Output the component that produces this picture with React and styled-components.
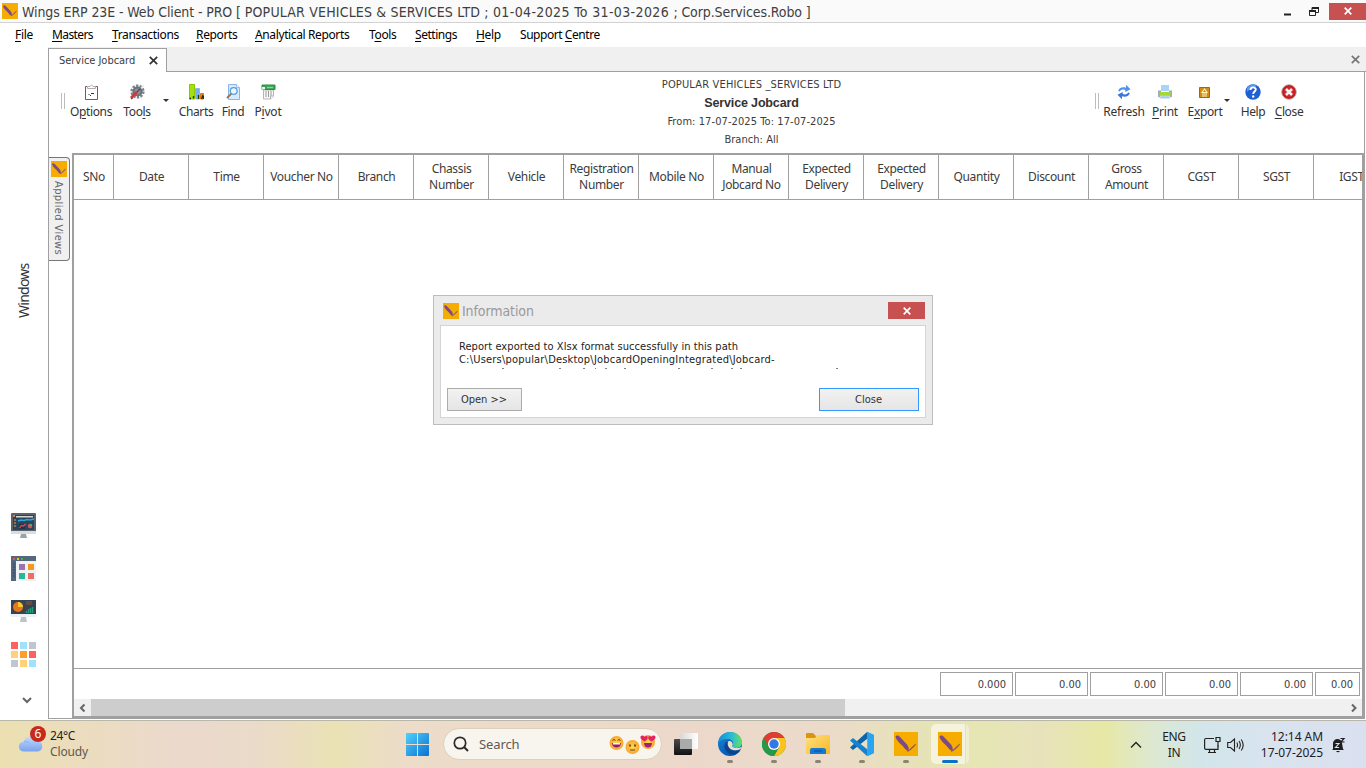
import React from "react";
import styled, { createGlobalStyle } from "styled-components";

const UI = `"Noto Sans", "Open Sans", sans-serif`;
const TAHOMA = `"DejaVu Sans Condensed", "DejaVu Sans", "Noto Sans", sans-serif`;
const LINE = "#a0a0a0";

const Global = createGlobalStyle`
  * { box-sizing: border-box; }
  body { margin: 0; background: #fff; overflow: hidden; font-family: ${UI}; }
  u { text-underline-offset: 2px; text-decoration-thickness: 1px; }
`;

const Screen = styled.div`
  width: 1366px; height: 768px; display: flex; flex-direction: column;
  position: relative; overflow: hidden; color: #3c3c3c; white-space: nowrap;
`;

/* Window chrome */
const TitleBar = styled.header`
  height: 23px; flex: none; display: flex; align-items: center; background: #fafafa;
  border-bottom: 1px solid #d2d2d2; padding-left: 2px;
`;
const TitleText = styled.div`
  font: 14px/22px ${TAHOMA}; letter-spacing: -0.1px; margin-left: 4px; flex: 1; color: #3f3f3f; padding-top: 1px;
  white-space: pre;
`;
const TitlePart = styled.span`letter-spacing: ${(p) => p.$ls}px;`;
const CaptionButtons = styled.div`display: flex; align-items: center; height: 22px;`;
const RedClose = styled.div`
  width: 37px; height: 17px; flex: none; background: #c75050; display: flex; align-items: center;
  justify-content: center;
`;
const MenuBar = styled.nav`
  height: 24px; flex: none; display: flex; padding-left: 15px; background: #fff;
`;
const MenuItem = styled.span`
  width: ${(p) => p.$w}px; font: 12px/24px ${UI}; letter-spacing: ${(p) => p.$ls || -0.35}px; color: #000;
`;

const Body = styled.div`flex: none; height: 673px; display: flex;`;

/* Left rail */
const Rail = styled.aside`
  width: 48px; display: flex; flex-direction: column; align-items: center; padding-right: 1px;
`;
const RailLabel = styled.span`
  writing-mode: vertical-rl; transform: rotate(180deg); font: 14px/18px ${UI}; letter-spacing: -0.75px;
  color: #333; margin-top: 215px; height: 57px; text-align: center;
`;
const RailIcons = styled.div`
  margin-top: 194px; display: flex; flex-direction: column; gap: 18px;
  svg { display: block; }
`;
const RailMore = styled.div`margin: 28px 0 0 7px; line-height: 0;`;

/* Workspace */
const Workspace = styled.main`flex: 1; display: flex; flex-direction: column;`;
const TabStrip = styled.div`
  height: 25px; flex: none; display: flex; justify-content: space-between; background: #f0f0f0;
  padding-top: 1px; box-shadow: inset 0 -1px 0 ${LINE};
`;
const Tab = styled.div`
  width: 119px; height: 24px; background: #fff; border: 1px solid ${LINE}; border-bottom: 0;
  display: flex; align-items: center; padding-left: 10px; position: relative;
`;
const TabLabel = styled.span`font: 11px/22px ${TAHOMA}; letter-spacing: -0.03px; width: 90px;`;
const StripClose = styled.div`padding: 7px 6px 0 0; line-height: 0;`;

const Page = styled.section`
  flex: none; height: 647px; width: 1317px; border-left: 1px solid ${LINE}; border-right: 1px solid ${LINE};
  border-bottom: 1px solid ${LINE};
  background: #fff;
`;
const Toolbar = styled.div`height: 81px; display: flex;`;
const ToolGroup = styled.div`
  display: flex; padding: 12px 0 0 ${(p) => p.$pad}px; width: ${(p) => p.$w}px; flex: none;
`;
const Grip = styled.i`
  width: 4px; height: 16px; margin-top: 9px; border: solid #bdbdbd; border-width: 0 1px;
`;
const ToolButton = styled.div`
  width: ${(p) => p.$w}px; margin-left: ${(p) => p.$ml}px; display: flex; flex-direction: column;
  align-items: center; svg { display: block; }
`;
const ToolLabel = styled.span`
  font: 12px/16px ${UI}; letter-spacing: ${(p) => p.$ls || -0.35}px; margin-top: 4px; color: #333;
`;
const Caret = styled.i`
  width: 0; height: 0; margin: 15px 0 0 ${(p) => p.$ml}px; border: solid transparent; border-width: 3px 3px 0;
  border-top-color: #333;
`;
const Heading = styled.div`
  width: 505px; flex: none; display: flex; flex-direction: column; align-items: center; padding-top: 4px;
`;
const HeadLine = styled.span`
  font: 11px/${(p) => p.$h || 18}px ${TAHOMA}; letter-spacing: ${(p) => p.$ls}px;
`;
const HeadTitle = styled.span`
  font: bold 12.5px/21px "Liberation Sans", Arial, sans-serif; letter-spacing: -0.15px; color: #333;
`;

const Content = styled.div`display: flex; height: 565px;`;
const SideTabs = styled.div`width: 23px; padding-top: 4px; flex: none;`;
const SideTab = styled.div`
  width: 21px; height: 104px; background: #f0f0f0; border: 1px solid #777; border-left: 0; border-radius: 0 4px 4px 0;
  padding: 3px 0 0 2px; display: flex; flex-direction: column; align-items: flex-start; svg { display: block; }
`;
const SideTabText = styled.span`
  writing-mode: vertical-rl; font: 11px/15px ${TAHOMA}; letter-spacing: 0.4px; color: #666; margin: 4px 0 0 0;
`;

/* Report grid */
const GridPanel = styled.div`
  width: 1292px; height: 565px; border: 2px solid ${LINE}; display: flex; flex-direction: column; flex: none;
  overflow: hidden;
`;
const HeadRow = styled.div`
  display: grid; grid-template-columns: 40px repeat(17, 75px); height: 45px; flex: none;
  border-bottom: 1px solid ${LINE};
`;
const HeadCell = styled.div`
  border-right: 1px solid ${LINE}; display: flex; align-items: center; justify-content: center; text-align: center;
  font: 12px/16px ${UI}; letter-spacing: -0.35px; white-space: pre-line; padding-left: 1px;
`;
const Rows = styled.div`flex: 1;`;
const Totals = styled.div`
  height: 31px; border-top: 1px solid ${LINE}; flex: none; display: flex; gap: 2px; padding: 3px 0 0 866px;
`;
const Total = styled.div`
  width: ${(p) => p.$w || 73}px; height: 24px; border: 1px solid ${LINE}; text-align: right; padding-right: 6px;
  font: 11px/23px ${TAHOMA}; letter-spacing: 0;
`;
const ScrollBar = styled.div`height: 17px; flex: none; background: #f0f0f0; display: flex; align-items: center;`;
const ScrollArrow = styled.div`
  width: 17px; height: 17px; display: flex; align-items: center; justify-content: center;
`;
const Thumb = styled.div`width: 754px; height: 17px; background: #cdcdcd; margin-right: 500px;`;

/* Message box */
const Dialog = styled.div`
  position: absolute; left: 433px; top: 295px; width: 500px; height: 130px; background: #ebebeb;
  border: 1px solid #bdbdbd; padding: 0 6px 6px; display: flex; flex-direction: column;
`;
const DialogTitle = styled.div`
  height: 29px; display: flex; align-items: center; padding: 0 1px 0 3px; color: #999;
  font: 14px/29px ${TAHOMA}; letter-spacing: -0.1px;
  span { flex: 1; margin-left: 3px; padding-top: 1px; }
`;
const DialogBody = styled.div`
  flex: 1; background: #fff; border: 1px solid #d4d4d4; display: flex; flex-direction: column;
`;
const Message = styled.div`
  height: 45px; padding: 14px 0 0 18px; font: 11px/13px ${TAHOMA}; color: #222; overflow: hidden;
  svg { display: block; margin-top: 1px; }
`;
const MessageLine = styled.div`letter-spacing: ${(p) => p.$ls}px;`;
const Buttons = styled.div`
  display: flex; justify-content: space-between; padding: 17px 6px 0;
`;
const Button = styled.button`
  width: ${(p) => p.$w}px; height: 23px; padding: 1px 1px 0 0; font: 11px/20px ${TAHOMA}; color: #333;
  border: 1px solid ${(p) => (p.$focus ? "#3399ff" : "#acacac")};
  background: linear-gradient(#f2f2f2, #e5e5e5);
`;

/* Taskbar */
const Taskbar = styled.footer`
  height: 48px; flex: none; display: flex; align-items: flex-start; border-top: 1px solid #b9b6aa; color: #222;
  background: linear-gradient(90deg, #ebe0b2 0, #ebd9cd 180px, #eadbc9 260px, #eae2b4 338px, #ecdcc8 400px,
    #eddbc9 500px, #ecd8ca 700px, #ebdbc9 830px, #e6e3b6 930px, #e6e6b4 985px, #e8e2bc 1040px, #e7e8a6 1105px,
    #dde8cf 1150px, #d2e6ea 1200px, #d9e3ef 1275px, #dae0ef 1366px);
`;
const Weather = styled.div`
  width: 386px; display: flex; padding: 5px 0 0 18px; svg { display: block; }
`;
const WeatherText = styled.div`
  font: 12px/16px ${UI}; letter-spacing: -0.35px; margin: 2px 0 0 3px; color: #222;
  div + div { color: #5d594e; letter-spacing: -0.15px; }
`;
const StartButton = styled.div`width: 57px; padding: 12px 0 0 20px; svg { display: block; }`;
const SearchBox = styled.div`
  width: 219px; height: 32px; margin-top: 7px; border-radius: 16px; background: #f8f4ee; border: 1px solid #dccfbe;
  display: flex; align-items: center; padding-left: 9px;
  span { font: 13px/18px ${UI}; letter-spacing: -0.1px; color: #5d5a57; margin-left: 10px; width: 130px; }
`;
const Apps = styled.div`display: flex; gap: 6px; margin: 3px 0 0 5px;`;
const AppSlot = styled.div`
  width: 38px; height: 40px; padding-top: 8px; border-radius: 5px; display: flex; flex-direction: column;
  align-items: center;
  background: ${(p) => (p.$active ? "linear-gradient(90deg, #f5f3dc 34px, #e3e2b9 34px 35px, #efeecf 35px)" : "none")};
  svg { display: block; }
`;
const Running = styled.i`
  width: ${(p) => (p.$active ? 16 : 6)}px; height: 3px; border-radius: 2px; margin-top: 4px;
  background: ${(p) => (p.$active ? "#0a73c9" : "#8b8474")};
`;
const Tray = styled.div`
  margin-left: auto; display: flex; height: 47px; align-items: center; width: 236px; svg { display: block; }
`;
const TrayText = styled.div`
  font: 12px/16px ${UI}; letter-spacing: ${(p) => p.$ls}px; text-align: ${(p) => p.$align};
  width: ${(p) => p.$w}px; margin-left: ${(p) => p.$ml}px; color: #1c1c1c;
`;
const TrayIcon = styled.div`margin-left: ${(p) => p.$ml}px;`;

const Wings = ({ s = 16 }) => (
  <svg width={s} height={s} viewBox="0 0 24 24">
    <rect width="24" height="24" fill="#f7ad00" />
    <path d="M1.500 4.500c1-1.600 3-1 4.500.4l7 7.600c1.600 1.900 2.100 4 1.500 6.500-3-.5-4-3-6-5.200C6.500 11.500 2 8.500 1.500 4.500Z" fill="#7d4a86" />
    <path d="M13.500 18.800c2.300-.5 4.200-3.800 8.300-6.800-2.300 3.600-5.200 6-8.300 7.400Z" fill="#7d4a86" stroke="#8a5575" strokeWidth=".7" />
  </svg>
);
const Cross = ({ s = 8, c = "#333", w = 1.8 }) => (
  <svg width={s} height={s} viewBox="0 0 8 8">
    <path d="M.7.7l6.600 6.600M7.300.7.700 7.300" stroke={c} strokeWidth={w} />
  </svg>
);
const Chevron = ({ d, c = "#666", w = 2 }) => (
  <svg width="10" height="10" viewBox="0 0 10 10">
    <path d={d} fill="none" stroke={c} strokeWidth={w} />
  </svg>
);

const icon16 = { width: 16, height: 16, viewBox: "0 0 16 16" };
const icons = {
  options: (
    <svg {...icon16}>
      <path d="M4 2.500H2.500v13h12v-13H12" fill="#fff" stroke="#80545a" />
      <path d="M4.500 4.500v-2H7L8.500.8 10 2.500h2.500v2Z" fill="#fff" stroke="#b5aaab" />
      <path d="M5.500 10.500h1M8 9.500h3M7 11.500h1" stroke="#333" />
    </svg>
  ),
  tools: (
    <svg {...icon16}>
      <circle cx="8.500" cy="7.500" r="5.800" fill="none" stroke="#7c848c" strokeWidth="2.600" strokeDasharray="2.300 1.300" />
      <circle cx="8.500" cy="7.500" r="4" fill="#8b939b" stroke="#69717a" strokeWidth="2" />
      <path d="M2 14l6-6" stroke="#d9343c" strokeWidth="2.800" />
      <path d="M8 8l3-3M2 15l1.500-1" stroke="#59484c" strokeWidth="1.400" />
      <path d="M12 4l2.500-2.500" stroke="#dfe5ea" strokeWidth="1.500" />
    </svg>
  ),
  charts: (
    <svg {...icon16}>
      <path d="M1.500.5h5V15h-5Z" fill="#a4e010" stroke="#8cc800" />
      <path d="M7.500 4.500h4V15h-4Z" fill="#78aef0" stroke="#90b7ea" />
      <path d="M12.500 9.500h3V15h-3Z" fill="#f58a13" stroke="#dc7a12" />
      <path d="M1.500 14.500h1.500M5.500 12v2.500M10.500 11v4M13.500 15l1.500-4M15.500 12v3" fill="none" stroke="#26320e" strokeWidth="1.300" />
    </svg>
  ),
  find: (
    <svg {...icon16}>
      <path d="M3.500.5h8L14.500 3.500v12h-11Z" fill="#d8eaff" stroke="#8db4e6" />
      <path d="M11.500.5v3h3" fill="#fff" stroke="#9bbbe6" />
      <circle cx="8.700" cy="7" r="3.400" fill="#eaf6ff" stroke="#5d9fd3" strokeWidth="1.300" />
      <path d="M6.300 9.700 2 14" stroke="#a8703f" strokeWidth="1.900" />
    </svg>
  ),
  pivot: (
    <svg {...icon16}>
      <path d="M3.500 6h10v6l-3 3h-7Z" fill="#f7f7f7" stroke="#b5b5b5" />
      <path d="M2 1h13v4.500H2Z" fill="#3aa556" stroke="#2d8c46" />
      <path d="M7 3.500h6" stroke="#8ad39d" strokeWidth="1.300" />
      <path d="M2 3h3v2.500H2Z" fill="#e8fbe9" />
      <path d="M6 7v6M8.500 7v6M11 7v5" stroke="#9a9a9a" />
      <path d="M10.500 15v-3h3" fill="#fff" stroke="#b0b0b0" />
    </svg>
  ),
  refresh: (
    <svg {...icon16}>
      <path d="M2.200 7C2.800 3.800 6.500 2.500 10 3.700V.7l4.500 4.500L9.300 8V6C7 5 5 5.500 3.800 7.500Z" fill="#4f92ea" />
      <path d="M13.800 9C13.200 12.200 9.500 13.500 6 12.300v3L1.500 10.800 6.700 8v2C9 11 11 10.500 12.200 8.500Z" fill="#3877dc" />
    </svg>
  ),
  print: (
    <svg {...icon16}>
      <path d="M4 1h8v6H4Z" fill="#a9d4fa" />
      <path d="M1 6.500h3V8h8V6.500h3V13H1Z" fill="#a5a9ad" />
      <path d="M2.500 8h11v3h-11Z" fill="#a5d832" />
      <path d="M3 11.500h10V14H3Z" fill="#f1f5f8" stroke="#b3bdc5" strokeWidth=".8" />
      <path d="M4 13h8" stroke="#79c6ea" strokeWidth="1.200" />
    </svg>
  ),
  export: (
    <svg {...icon16}>
      <path d="M2.500 3.500h10v10h-10Z" fill="#d08d14" stroke="#a56607" />
      <path d="M7.500 5 5 8.500h5ZM5 10h5M5 12h5" fill="none" stroke="#fff2c6" strokeWidth="1.100" />
    </svg>
  ),
  help: (
    <svg {...icon16}>
      <circle cx="8" cy="8" r="7.700" fill="#1f5fd4" />
      <path d="M2 4a7 7 0 0 1 10-2c-3 2-7 2-10 6Z" fill="#5d96f0" />
      <path d="M5.500 6c0-3.500 5.300-3.300 5.300-.4C10.800 7.500 8.200 7.700 8.200 10" fill="none" stroke="#fff" strokeWidth="1.900" />
      <circle cx="8.200" cy="12.500" r="1.200" fill="#fff" />
    </svg>
  ),
  close: (
    <svg {...icon16}>
      <circle cx="8" cy="8" r="7.300" fill="#d42427" stroke="#b9b2b2" strokeWidth="1" />
      <circle cx="8" cy="8" r="6.100" fill="none" stroke="#b01518" strokeWidth=".8" />
      <path d="M5 5l6 6M11 5l-6 6" stroke="#f2f4f4" strokeWidth="2.600" />
    </svg>
  ),
};

const RailDesk = () => (
  <svg width="25" height="25" viewBox="0 0 25 25">
    <rect width="25" height="20" rx="1" fill="#5c6268" />
    <rect y="18" width="25" height="3" fill="#d9dde1" />
    <path d="M10 21h5l1 4H9Z" fill="#98a4aa" />
    <rect x="2" y="2" width="21" height="15" fill="#2c4459" />
    <path d="M5 3h17v1.500H5Z" fill="#d0d5da" />
    <path d="M2 2h2v2H2Z" fill="#e2734d" />
    <path d="M3 7h2M3 10h2M3 13h2" stroke="#e8a14d" />
    <path d="M7 8l3-1 3 .5 3-1 3 .5 4-1" fill="none" stroke="#2ba9d7" strokeWidth="1.600" />
    <path d="M8 11h6v5H8Z" fill="#20344e" /><path d="M8.500 15l2-2.500 2 .5 2-2" fill="none" stroke="#e34f50" strokeWidth="1.200" />
    <circle cx="19" cy="13" r="2.200" fill="#e05252" /><path d="M19 13v-2.200A2.200 2.200 0 0 1 21.200 13Z" fill="#31b993" />
  </svg>
);
const RailLayout = () => (
  <svg width="25" height="25" viewBox="0 0 25 25">
    <rect width="25" height="25" fill="#eef2f4" />
    <rect width="25" height="5" fill="#54697c" />
    <rect y="5" width="5" height="20" fill="#53657f" />
    <path d="M2 3h2" stroke="#e8524a" strokeWidth="2" /><path d="M6 3h2" stroke="#f2c311" strokeWidth="2" /><path d="M10 3h2" stroke="#37b45f" strokeWidth="2" />
    <path d="M2 8h2M2 11h2M2 14h2M2 17h2M2 20h2" stroke="#354663" />
    <rect x="8" y="8" width="6" height="6" fill="#9c73ab" /><rect x="17" y="8" width="6" height="6" fill="#f39a1d" />
    <rect x="8" y="17" width="6" height="6" fill="#24b897" /><rect x="17" y="17" width="6" height="6" fill="#ee6d5f" />
  </svg>
);
const RailChart = () => (
  <svg width="25" height="25" viewBox="0 0 25 25">
    <rect y="1" width="25" height="15" fill="#364452" />
    <rect y="15" width="25" height="3" fill="#edf0f2" />
    <path d="M10 18h5l1 5H9Z" fill="#bcc3c9" />
    <circle cx="7" cy="8" r="5" fill="#e87619" /><path d="M7 8V3a5 5 0 0 1 5 5Z" fill="#fbc52d" />
    <path d="M15 3h6M15 5h6" stroke="#8e563a" strokeWidth="1.200" />
    <path d="M15.500 14v-2M17.500 14v-4M19.500 14V9M21.500 14V8" stroke="#259d7c" strokeWidth="1.400" />
  </svg>
);
const RailTiles = () => (
  <svg width="25" height="25" viewBox="0 0 25 25">
    {["#ff6161", "#a0e1fc", "#c1c5d0", "#ffd179", "#ff9f29", "#ff6161", "#c1c5d0", "#ffd179", "#a0e1fc"].map((c, i) => (
      <rect key={i} x={(i % 3) * 9} y={Math.floor(i / 3) * 9} width="7" height="7" fill={c} />
    ))}
  </svg>
);

const WeatherIcon = () => (
  <svg width="29" height="30" viewBox="0 0 29 30">
    <defs><linearGradient id="cl" x2="0" y2="1"><stop stopColor="#c4dbfb" /><stop offset="1" stopColor="#79a3ee" /></linearGradient></defs>
    <path d="M6 25.500a5 5 0 0 1-.3-10A7 7 0 0 1 19 15a5.300 5.300 0 0 1 1 10.500Z" fill="url(#cl)" />
    <path d="M6 16c2-.8 4-.3 5.500 1" fill="none" stroke="#87b0ee" />
    <circle cx="20" cy="8" r="8" fill="#c42b1c" />
    <text x="20" y="12.300" textAnchor="middle" fill="#fff" fontSize="12" fontFamily="Noto Sans, sans-serif">6</text>
  </svg>
);
const StartIcon = () => (
  <svg width="23" height="23" viewBox="0 0 23 23">
    <defs><linearGradient id="wn" x2="1" y2="1" gradientUnits="objectBoundingBox"><stop stopColor="#52d1fb" /><stop offset="1" stopColor="#0871d2" /></linearGradient></defs>
    <path d="M0 1q0-1 1-1h10v11H0ZM12 0h10q1 0 1 1v10H12ZM0 12h11v11H1q-1 0-1-1ZM12 12h11v10q0 1-1 1H12Z" fill="url(#wn)" />
  </svg>
);
const Smileys = () => (
  <svg width="47" height="24" viewBox="0 0 47 24">
    <defs><radialGradient id="fc"><stop stopColor="#ffd84f" /><stop offset="1" stopColor="#f8a52d" /></radialGradient></defs>
    <circle cx="7.500" cy="11" r="7" fill="url(#fc)" />
    <path d="M3 11h9c0 6-9 6-9 0Z" fill="#8e1f6f" /><path d="M4 11h7v1.500H4Z" fill="#fff" />
    <path d="M3.500 8.500q1.500-2 3 0M8.500 8.500q1.500-2 3 0" fill="none" stroke="#6d3b20" />
    <circle cx="23.500" cy="15" r="7" fill="url(#fc)" />
    <path d="M21 12.500v2M26 12.500v2" stroke="#463025" strokeWidth="1.600" /><path d="M21 18h5" stroke="#70432b" />
    <circle cx="39" cy="10" r="7" fill="url(#fc)" />
    <path d="M35 11h8c0 6-8 6-8 0Z" fill="#a02078" />
    <path d="M35.500 9.500c-8-4-2-8.500 0-4.500 3-3 5.500 1.500 0 4.500ZM42.500 9.500c-6-3-2.500-7.500 0-4.500 2-4 8 .5 0 4.500Z" fill="#e52264" />
  </svg>
);
const TaskView = () => (
  <svg width="24" height="24" viewBox="0 0 24 24">
    <defs>
      <linearGradient id="tb" x2="0" y2="1"><stop stopColor="#4b4b4b" /><stop offset="1" stopColor="#111" /></linearGradient>
      <linearGradient id="tw" x2="1" y2="0"><stop stopColor="#d8d8d8" /><stop offset="1" stopColor="#fff" /></linearGradient>
    </defs>
    <rect y="7" width="18" height="16" rx="1" fill="url(#tb)" />
    <rect x="6" y="1" width="18" height="16" rx="1" fill="url(#tw)" />
    <path d="M6 7h12v10H6Z" fill="#aaa" />
  </svg>
);
const Edge = () => (
  <svg width="24" height="24" viewBox="0 0 24 24">
    <defs>
      <linearGradient id="eg" x2="1"><stop stopColor="#168dd6" /><stop offset=".55" stopColor="#29bbd8" /><stop offset="1" stopColor="#66e25d" /></linearGradient>
      <linearGradient id="eb" x2=".7" y2="1"><stop stopColor="#1689dd" /><stop offset="1" stopColor="#0c4da6" /></linearGradient>
    </defs>
    <circle cx="12" cy="12" r="12" fill="url(#eb)" />
    <path d="M0 11C1 4 6 0 12 0c7 0 12 5 12 10.500 0 4-3 5.500-6 5.500-2.500 0-4-1-4-2 0-.8 1-1.300 1-3 0-2-2-4-5.500-4C5 7 1.500 9 0 11Z" fill="url(#eg)" />
    <path d="M9 9.500c-2.500 1.500-3.500 5-1.500 8.500 2.200 4 6.500 5 9.500 4.500 2-.7 4.300-2.500 5.300-4.300-4.300 2-11 .8-12-4-.3-1.800 0-3.500-1.300-4.700Z" fill="#09458f" />
    <path d="M14.700 12.500c-.2-2.500-2-4-4.200-3.200-1.500 1.700-.8 5.700 2 7.600 2.500 1.700 6.500 2 9.800.3.800-.8 1.200-1.600 1.300-2.500-3 2-8.700 1.500-9.600-.5-.1-.7.600-.9.700-1.700Z" fill="#eddcca" />
  </svg>
);
const Chrome = () => (
  <svg width="24" height="24" viewBox="0 0 24 24">
    <circle cx="12" cy="12" r="12" fill="#1e8e3e" />
    <path d="M12 12 1.600 6A12 12 0 0 1 22.400 6Z" fill="#e03c31" />
    <path d="M12 12V6h10.400A12 12 0 0 1 12 24l5.200-9Z" fill="#fcc31e" />
    <path d="M1.600 6 6.800 15 12 12V6Z" fill="#e03c31" />
    <path d="M1.600 6 6.800 15 12 18 17.200 15 12 24A12 12 0 0 1 1.600 6Z" fill="#279847" />
    <circle cx="12" cy="12" r="6" fill="#fff" /><circle cx="12" cy="12" r="4.700" fill="#3478e5" />
  </svg>
);
const Folder = () => (
  <svg width="24" height="24" viewBox="0 0 24 24">
    <defs><linearGradient id="fd" x2="1" y2="1"><stop stopColor="#ffe083" /><stop offset="1" stopColor="#f8b820" /></linearGradient></defs>
    <path d="M0 2q0-1 1-1h6l3 3h13v8H0Z" fill="#d79512" />
    <path d="M0 6h9l2-3h12q1 0 1 1v17q0 1-1 1H1q-1 0-1-1Z" fill="url(#fd)" />
    <path d="M4 22v-4q0-2 2-2h11q3 0 3 2v4Z" fill="#1779cf" /><path d="M8 19h8" stroke="#0d54a8" strokeWidth="1.200" />
  </svg>
);
const Code = () => (
  <svg width="24" height="24" viewBox="0 0 24 24">
    <path d="M17.500 0 24 3v18l-6.500 3Z" fill="#27a3ee" />
    <path d="M17.500 0v6.500L3 18 0 15.500 17 0Z" fill="#0c65a9" />
    <path d="M17.500 24v-6.500L3 6 0 8.500 17 24Z" fill="#1683ce" />
    <path d="M17.500 0 24 3v18l-6.500 3V0Z" fill="#29a5ef" />
  </svg>
);

const Menu = [
  [37, "", "F", "ile"], [60, "", "M", "asters", -0.6], [84, "", "T", "ransactions"], [59, "", "R", "eports"],
  [114, "", "A", "nalytical Reports", -0.38], [46, "T", "o", "ols"], [61, "", "S", "ettings", -0.45], [44, "", "H", "elp"],
  [90, "Support ", "C", "entre", -0.45],
];
const Columns = [
  "SNo", "Date", "Time", "Voucher No", "Branch", "Chassis\nNumber", "Vehicle", "Registration\nNumber", "Mobile No",
  "Manual\nJobcard No", "Expected\nDelivery", "Expected\nDelivery", "Quantity", "Discount", "Gross\nAmount", "CGST",
  "SGST", "IGST",
];

const Tool = ({ icon, w, ml, children, ls }) => (
  <ToolButton $w={w} $ml={ml}>{icons[icon]}<ToolLabel $ls={ls}>{children}</ToolLabel></ToolButton>
);

export default function App() {
  return (
    <Screen>
      <Global />
      <TitleBar>
        <Wings />
        <TitleText>
          <TitlePart $ls={-0.11}>{"Wings ERP 23E - Web Client - PRO [ "}</TitlePart>
          <TitlePart $ls={0.18}>{"POPULAR VEHICLES & SERVICES LTD ; "}</TitlePart>
          <TitlePart $ls={0.36}>{"01-04-2025 To 31-03-2026 "}</TitlePart>
          <TitlePart $ls={-0.1}>{"; Corp.Services.Robo ]"}</TitlePart>
        </TitleText>
        <CaptionButtons>
          <svg width="46" height="16" viewBox="0 0 46 16">
            <path d="M1 11.500h7" stroke="#222" strokeWidth="2" />
            <path d="M26.500 7.500h6v5h-6ZM29 7V4.500h6.500v5H33" fill="none" stroke="#222" />
            <path d="M26 8h7M29 5h7" stroke="#222" strokeWidth="2" />
          </svg>
          <RedClose><Cross c="#fff" w={1.7} /></RedClose>
        </CaptionButtons>
      </TitleBar>
      <MenuBar>
        {Menu.map(([w, a, k, b, ls]) => (
          <MenuItem key={a + k + b} $w={w} $ls={ls}>{a}<u>{k}</u>{b}</MenuItem>
        ))}
      </MenuBar>
      <Body>
        <Rail>
          <RailLabel>Windows</RailLabel>
          <RailIcons><RailDesk /><RailLayout /><RailChart /><RailTiles /></RailIcons>
          <RailMore><Chevron d="M1 3l4 4 4-4" /></RailMore>
        </Rail>
        <Workspace>
          <TabStrip>
            <Tab><TabLabel>Service Jobcard</TabLabel><Cross s={9} c="#333" w={1.500} /></Tab>
            <StripClose><Cross s={9} c="#777" w={1.500} /></StripClose>
          </TabStrip>
          <Page>
            <Toolbar>
              <ToolGroup $pad={12} $w={450}>
                <Grip />
                <Tool icon="options" w={46} ml={3}>O<u>p</u>tions</Tool>
                <Tool icon="tools" w={32} ml={7}>Too<u>l</u>s</Tool>
                <Caret $ml={10} />
                <Tool icon="charts" w={38} ml={8}>Charts</Tool>
                <Tool icon="find" w={28} ml={4}>Find</Tool>
                <Tool icon="pivot" w={32} ml={5} ls={-0.2}>P<u>i</u>vot</Tool>
              </ToolGroup>
              <Heading>
                <HeadLine $ls={0.16} $h={17}>POPULAR VEHICLES _SERVICES LTD</HeadLine>
                <HeadTitle>Service Jobcard</HeadTitle>
                <HeadLine $ls={0.08} $h={16}>From: 17-07-2025 To: 17-07-2025</HeadLine>
                <HeadLine $ls={0.05} $h={20}>Branch: All</HeadLine>
              </Heading>
              <ToolGroup $pad={91} $w={359}>
                <Grip />
                <Tool icon="refresh" w={44} ml={3} ls={-0.25}>Refresh</Tool>
                <Tool icon="print" w={30} ml={4} ls={-0.25}><u>P</u>rint</Tool>
                <Tool icon="export" w={38} ml={6}>E<u>x</u>port</Tool>
                <Caret $ml={0} />
                <Tool icon="help" w={30} ml={8} ls={-0.4}>Help</Tool>
                <Tool icon="close" w={34} ml={4}><u>C</u>lose</Tool>
              </ToolGroup>
            </Toolbar>
            <Content>
              <SideTabs>
                <SideTab><Wings /><SideTabText>Applied Views</SideTabText></SideTab>
              </SideTabs>
              <GridPanel>
                <HeadRow>{Columns.map((c, i) => <HeadCell key={i}>{c}</HeadCell>)}</HeadRow>
                <Rows />
                <Totals>
                  <Total>0.000</Total><Total>0.00</Total><Total>0.00</Total><Total>0.00</Total><Total>0.00</Total>
                  <Total $w={45}>0.00</Total>
                </Totals>
                <ScrollBar>
                  <ScrollArrow><Chevron d="M6.500 1.500 3 5 6.500 8.500" /></ScrollArrow>
                  <Thumb />
                  <ScrollArrow><Chevron d="M3 1.500 6.500 5 3 8.500" /></ScrollArrow>
                </ScrollBar>
              </GridPanel>
            </Content>
          </Page>
        </Workspace>
      </Body>
      <Taskbar>
        <Weather>
          <WeatherIcon />
          <WeatherText><div>24°C</div><div>Cloudy</div></WeatherText>
        </Weather>
        <StartButton><StartIcon /></StartButton>
        <SearchBox>
          <svg width="16" height="16" viewBox="0 0 16 16"><circle cx="7" cy="7" r="5.700" fill="none" stroke="#2a2a2a" strokeWidth="1.700" /><path d="M11 11l4 4" stroke="#2a2a2a" strokeWidth="2" /></svg>
          <span>Search</span>
          <Smileys />
        </SearchBox>
        <Apps>
          <AppSlot><TaskView /></AppSlot>
          <AppSlot><Edge /><Running /></AppSlot>
          <AppSlot><Chrome /><Running /></AppSlot>
          <AppSlot><Folder /><Running /></AppSlot>
          <AppSlot><Code /><Running /></AppSlot>
          <AppSlot><Wings s={24} /><Running /></AppSlot>
          <AppSlot $active><Wings s={24} /><Running $active /></AppSlot>
        </Apps>
        <Tray>
          <TrayIcon $ml={0}><svg width="12" height="8" viewBox="0 0 12 8"><path d="M1 6.500 6 1.500l5 5" fill="none" stroke="#222" strokeWidth="1.400" /></svg></TrayIcon>
          <TrayText $ls={-0.35} $align="center" $w={30} $ml={17}>ENG<br />IN</TrayText>
          <TrayIcon $ml={15}>
            <svg width="18" height="18" viewBox="0 0 18 18" fill="none" stroke="#222" strokeWidth="1.200">
              <path d="M10 2.500H2Q.6 2.500.6 4v8q0 1.400 1.400 1.400h12V9.500M5.500 13.500v3M10.500 13.500v3M4 16.500h8" />
              <path d="M12 1.500h4v4h-4ZM14 5.500v5" />
            </svg>
          </TrayIcon>
          <TrayIcon $ml={5}>
            <svg width="18" height="16" viewBox="0 0 18 16" fill="none" stroke="#222" strokeWidth="1.100">
              <path d="M.7 5.500h2.800L7.500 2v12l-4-3.500H.7Z" />
              <path d="M9.800 5.500q1.500 2.500 0 5M12 4q2.700 4 0 8M14.200 2.500q4 5.500 0 11" />
            </svg>
          </TrayIcon>
          <TrayText $ls={-0.05} $align="right" $w={70} $ml={8}>12:14 AM<br />17-07-2025</TrayText>
          <TrayIcon $ml={8}>
            <svg width="15" height="16" viewBox="0 0 15 16">
              <path d="M2 12V7a4.500 4.500 0 0 1 9-1l1 6 1 1H1Z" fill="#1e1e1e" /><path d="M5 14h4q-2 2.500-4 0Z" fill="#1e1e1e" />
              <path d="M9.500 1.500h3.500l-3 3.500h3.500" fill="none" stroke="#1e1e1e" strokeWidth="1.200" />
              <path d="M4.500 6.500h3.500l-3.500 4h3.500" fill="none" stroke="#dbe1ee" strokeWidth="1.100" />
            </svg>
          </TrayIcon>
        </Tray>
      </Taskbar>
      <Dialog>
        <DialogTitle><Wings /><span>Information</span><RedClose><Cross c="#fff" w={1.700} /></RedClose></DialogTitle>
        <DialogBody>
          <Message>
            <MessageLine $ls={0.07}>Report exported to Xlsx format successfully in this path</MessageLine>
            <MessageLine $ls={0.2}>C:\Users\popular\Desktop\JobcardOpeningIntegrated\Jobcard-</MessageLine>
            <svg width="400" height="2" viewBox="0 0 400 2">
              <path d="M43 1.500h2M100 1.500h2M124 1.500h2M136 1.500h1M146 1.500h2M165 1.500h2M219 1.500h2M252 1.500h2M272 1.500h2M281 1.500h2M377 1.500h2" stroke="#8a7f70" />
            </svg>
          </Message>
          <Buttons><Button $w={75}>Open &gt;&gt;</Button><Button $w={100} $focus>Close</Button></Buttons>
        </DialogBody>
      </Dialog>
    </Screen>
  );
}
